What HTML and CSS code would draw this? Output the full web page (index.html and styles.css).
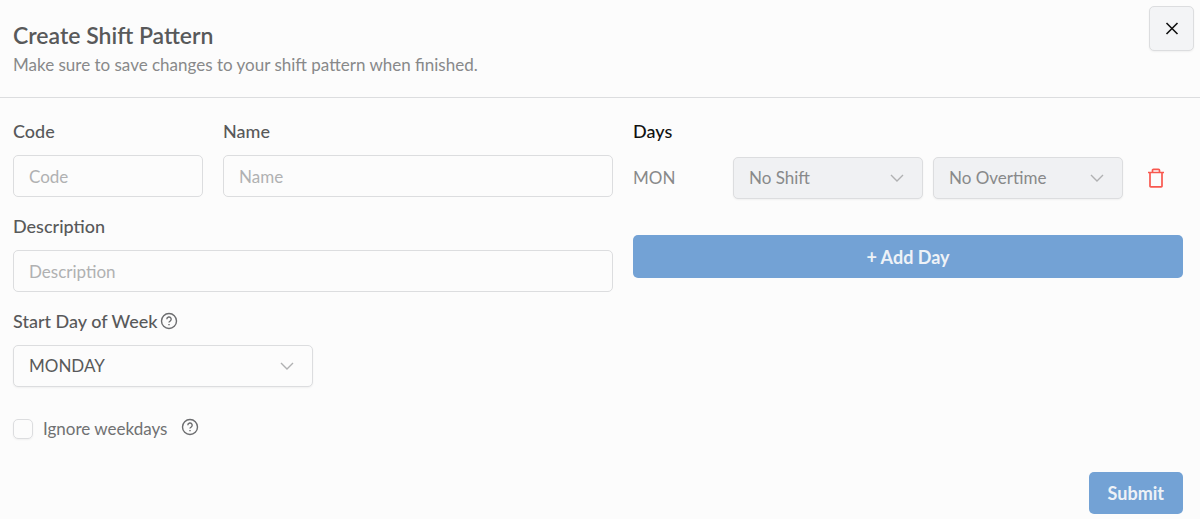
FILE: index.html
```html
<!DOCTYPE html>
<html lang="en">
<head>
<meta charset="utf-8">
<meta name="viewport" content="width=device-width, initial-scale=1">
<title>Create Shift Pattern</title>
<link rel="stylesheet" href="styles.css">
</head>
<body>
<svg class="sprite" aria-hidden="true">
  <symbol id="chevron" viewBox="0 0 14 8"><path d="M1 1l6 6 6-6"/></symbol>
  <symbol id="help" viewBox="0 0 18 18"><circle cx="9" cy="9" r="7.500"/><path d="M6.800 7.200a2.200 2.200 0 1 1 3.300 1.900C9.300 9.500 9 9.800 9 10.500"/><path d="M9 12.100v1.200"/></symbol>
</svg>
<header class="header">
  <div>
    <h1 class="title">Create Shift Pattern</h1>
    <p class="subtitle">Make sure to save changes to your shift pattern when finished.</p>
  </div>
  <button class="close" type="button" aria-label="Close">
    <svg class="close-icon" viewBox="0 0 14 14"><path d="M1.500 1l11 11M12.500 1l-11 11"/></svg>
  </button>
</header>
<form class="form">
  <div class="columns">
    <div class="details">
      <div class="field">
        <label class="label" for="code">Code</label>
        <input class="input" id="code" type="text" placeholder="Code">
      </div>
      <div class="field">
        <label class="label" for="name">Name</label>
        <input class="input" id="name" type="text" placeholder="Name">
      </div>
      <div class="field field-wide">
        <label class="label" for="description">Description</label>
        <input class="input" id="description" type="text" placeholder="Description">
      </div>
      <div class="field field-wide">
        <div class="label-row">
          <label class="label" for="start">Start Day of Week</label>
          <svg class="help"><use href="#help"/></svg>
        </div>
        <div class="select-wrap start">
          <select class="select" id="start"><option>MONDAY</option></select>
          <svg class="chevron"><use href="#chevron"/></svg>
        </div>
      </div>
      <div class="check-row field-wide">
        <input class="checkbox" id="ignore" type="checkbox">
        <label class="check-label" for="ignore">Ignore weekdays</label>
        <svg class="help help-raised"><use href="#help"/></svg>
      </div>
    </div>
    <section class="days">
      <h2 class="days-title">Days</h2>
      <div class="day">
        <span class="day-name">MON</span>
        <div class="select-wrap">
          <select class="select select-muted" aria-label="Shift"><option>No Shift</option></select>
          <svg class="chevron"><use href="#chevron"/></svg>
        </div>
        <div class="select-wrap">
          <select class="select select-muted" aria-label="Overtime"><option>No Overtime</option></select>
          <svg class="chevron"><use href="#chevron"/></svg>
        </div>
        <button class="trash" type="button" aria-label="Remove day">
          <svg class="trash-icon" viewBox="0 0 18 20"><path d="M1 4.500h16M3 4.500V18a.8.8 0 0 0 .8.8h10.400a.8.8 0 0 0 .8-.8V4.500M5.500 4.500V2.300a1 1 0 0 1 1-1h5a1 1 0 0 1 1 1v2.200"/></svg>
        </button>
      </div>
      <button class="button" type="button">+ Add Day</button>
    </section>
  </div>
  <div class="actions"><button class="button submit" type="submit">Submit</button></div>
</form>
</body>
</html>
```
FILE: styles.css
```css
* { box-sizing: border-box; }
body {
  margin: 0;
  background: #fcfcfc;
  color: #58595a;
  font: 17px/24px Lato, "Liberation Sans", sans-serif;
}
button, input, select { font: inherit; color: inherit; }
svg { fill: none; stroke: currentColor; flex: none; }
.sprite { position: absolute; width: 0; height: 0; }
.header {
  display: flex;
  justify-content: space-between;
  align-items: flex-start;
  padding: 6px 6px 20px 13px;
  border-bottom: 1px solid #dcdddf;
}
.title { margin: 14px 0 3px; font-size: 23px; line-height: 30px; font-weight: 600; }
.subtitle { margin: 0; color: #88898a; }
.close {
  display: grid;
  place-items: center;
  width: 45px;
  height: 45px;
  padding: 0;
  border: 1px solid #dcdddf;
  border-radius: 5px;
  background: #f3f4f6;
  color: #111;
  box-shadow: 0 1px 2px #0000000d;
}
.close-icon { width: 14px; height: 14px; stroke-width: 1.6; }
.form { padding: 21px 17px 4px 13px; }
.columns { display: grid; grid-template-columns: 12fr 11fr; gap: 20px; }
.details {
  display: grid;
  grid-template-columns: 19fr 39fr;
  gap: 17px 20px;
  align-content: start;
}
.field { display: grid; gap: 12px; min-width: 0; }
.field-wide { grid-column: 1 / -1; }
.label, .days-title { font-size: 18px; font-weight: 500; }
.label-row { display: flex; align-items: center; gap: 2px; }
.input, .select {
  display: block;
  width: 100%;
  height: 42px;
  padding: 0 15px;
  border: 1px solid #dcdddf;
  border-radius: 5px;
  background: #fcfcfc;
}
.input::placeholder { color: #b0b1b2; opacity: 1; }
.select { appearance: none; box-shadow: 0 1px 2px #0000000d; }
.select-muted { background: #f0f1f3; color: #88898a; }
.select-wrap { position: relative; flex: 1; }
.start { width: 50%; }
.chevron {
  position: absolute;
  right: 19px;
  top: 17px;
  width: 14px;
  height: 8px;
  color: #b0b1b2;
  stroke-width: 1.4;
  pointer-events: none;
}
.help { width: 18px; height: 18px; color: #6c6d6f; stroke-width: 1.4; }
.check-row { display: flex; align-items: center; padding-top: 13px; }
.checkbox {
  appearance: none;
  width: 20px;
  height: 20px;
  margin: 0 10px 0 0;
  border: 1px solid #dcdddf;
  border-radius: 5px;
  box-shadow: 0 1px 2px #0000000d;
}
.check-label { color: #707172; }
.help-raised { margin: 0 0 4px 14px; }
.days-title { margin: 0 0 14px; color: #111; }
.day { display: flex; align-items: center; gap: 10px; margin-bottom: 36px; }
.day-name { width: 90px; color: #88898a; }
.trash {
  display: grid;
  place-items: center;
  width: 50px;
  height: 42px;
  padding: 0 4px 0 0;
  border: 0;
  background: none;
  color: #f8584f;
}
.trash-icon { width: 18px; height: 20px; stroke-width: 1.7; }
.button {
  width: 100%;
  height: 43px;
  padding: 0 19px;
  border: 0;
  border-radius: 5px;
  background: #73a2d5;
  color: #eef2f7;
  font-size: 18px;
  font-weight: 700;
}
.actions { display: flex; justify-content: flex-end; padding-top: 31px; }
.submit { width: auto; height: 42px; }
```
